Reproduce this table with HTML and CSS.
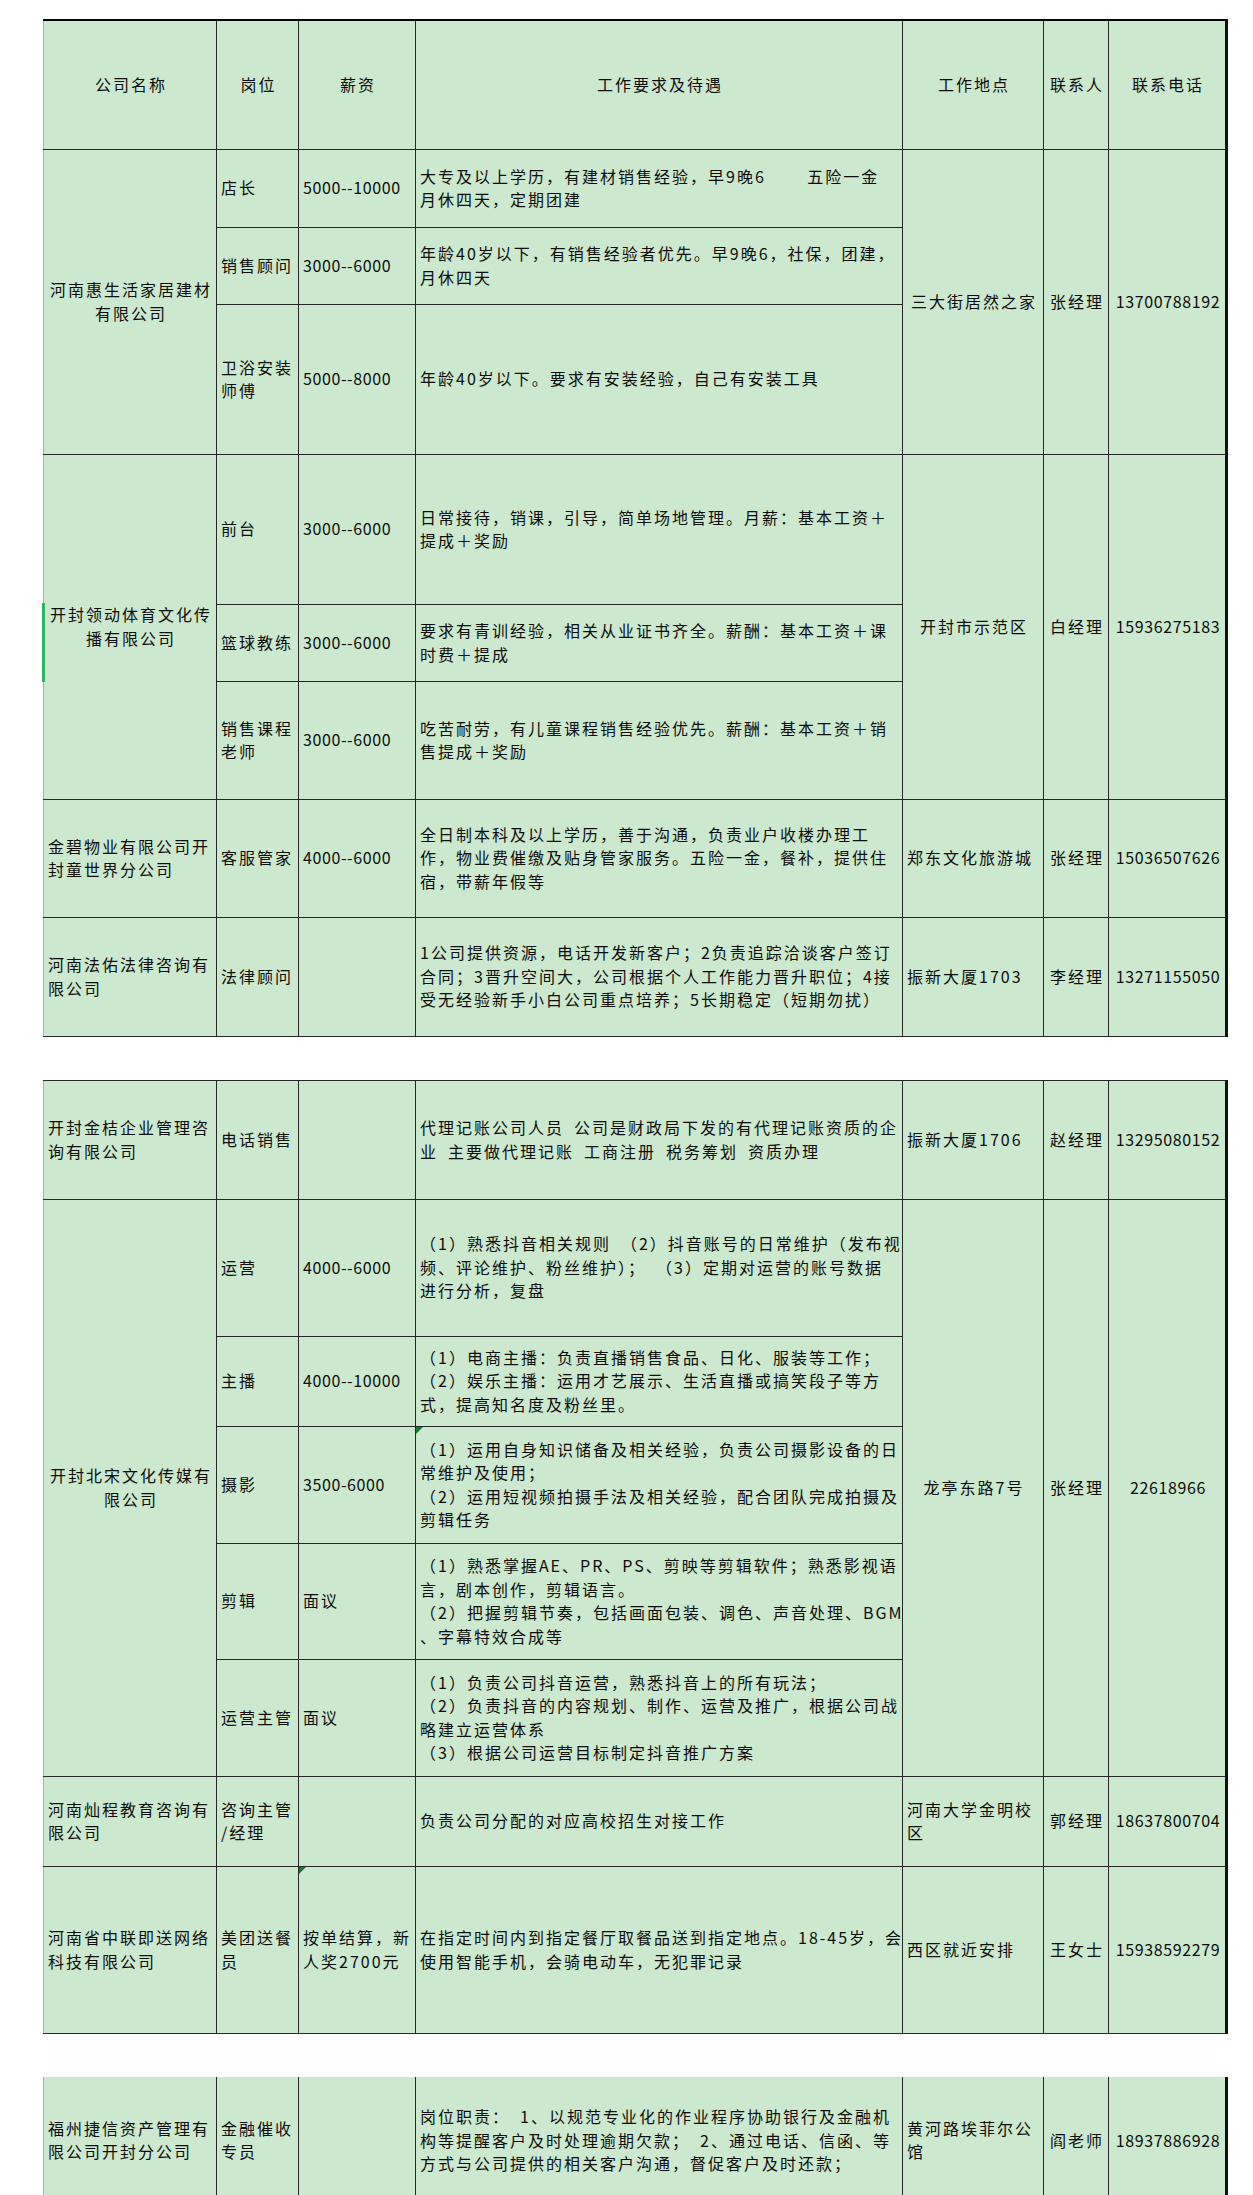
FILE: index.html
```html
<!DOCTYPE html>
<html lang="zh-CN">
<head>
<meta charset="utf-8">
<title>招聘信息</title>
<link rel="stylesheet" href="styles.css">
</head>
<body>
<div class="sheet">
  <span class="row-mark"></span>

  <table class="jobs first">
    <colgroup>
      <col class="c-co"><col class="c-pos"><col class="c-pay"><col class="c-desc"><col class="c-loc"><col class="c-who"><col class="c-tel">
    </colgroup>
    <tr class="h129">
      <th class="co">公司名称</th><th>岗位</th><th>薪资</th><th>工作要求及待遇</th><th>工作地点</th><th>联系人</th><th>联系电话</th>
    </tr>
    <tr class="h78">
      <td class="co center" rowspan="3">河南惠生活家居建材<br>有限公司</td>
      <td>店长</td>
      <td class="num">5000--10000</td>
      <td>大专及以上学历，有建材销售经验，早9晚6　　 五险一金<br>月休四天，定期团建</td>
      <td class="center" rowspan="3">三大街居然之家</td>
      <td class="center" rowspan="3">张经理</td>
      <td class="center num" rowspan="3">13700788192</td>
    </tr>
    <tr class="h77">
      <td>销售顾问</td>
      <td class="num">3000--6000</td>
      <td>年龄40岁以下，有销售经验者优先。早9晚6，社保，团建，<br>月休四天</td>
    </tr>
    <tr class="h150">
      <td>卫浴安装<br>师傅</td>
      <td class="num">5000--8000</td>
      <td>年龄40岁以下。要求有安装经验，自己有安装工具</td>
    </tr>
    <tr class="h150">
      <td class="co center" rowspan="3">开封领动体育文化传<br>播有限公司</td>
      <td>前台</td>
      <td class="num">3000--6000</td>
      <td>日常接待，销课，引导，简单场地管理。月薪：基本工资＋<br>提成＋奖励</td>
      <td class="center" rowspan="3">开封市示范区</td>
      <td class="center" rowspan="3">白经理</td>
      <td class="center num" rowspan="3">15936275183</td>
    </tr>
    <tr class="h77">
      <td>篮球教练</td>
      <td class="num">3000--6000</td>
      <td>要求有青训经验，相关从业证书齐全。薪酬：基本工资＋课<br>时费＋提成</td>
    </tr>
    <tr class="h118">
      <td>销售课程<br>老师</td>
      <td class="num">3000--6000</td>
      <td>吃苦耐劳，有儿童课程销售经验优先。薪酬：基本工资＋销<br>售提成＋奖励</td>
    </tr>
    <tr class="h118">
      <td class="co">金碧物业有限公司开<br>封童世界分公司</td>
      <td>客服管家</td>
      <td class="num">4000--6000</td>
      <td>全日制本科及以上学历，善于沟通，负责业户收楼办理工<br>作，物业费催缴及贴身管家服务。五险一金，餐补，提供住<br>宿，带薪年假等</td>
      <td>郑东文化旅游城</td>
      <td class="center">张经理</td>
      <td class="center num">15036507626</td>
    </tr>
    <tr class="h119">
      <td class="co">河南法佑法律咨询有<br>限公司</td>
      <td>法律顾问</td>
      <td></td>
      <td>1公司提供资源，电话开发新客户；2负责追踪洽谈客户签订<br>合同；3晋升空间大，公司根据个人工作能力晋升职位；4接<br>受无经验新手小白公司重点培养；5长期稳定（短期勿扰）</td>
      <td>振新大厦1703</td>
      <td class="center">李经理</td>
      <td class="center num">13271155050</td>
    </tr>
  </table>

  <table class="jobs second">
    <colgroup>
      <col class="c-co"><col class="c-pos"><col class="c-pay"><col class="c-desc"><col class="c-loc"><col class="c-who"><col class="c-tel">
    </colgroup>
    <tr class="h119">
      <td class="co">开封金桔企业管理咨<br>询有限公司</td>
      <td>电话销售</td>
      <td></td>
      <td>代理记账公司人员&ensp;公司是财政局下发的有代理记账资质的企<br>业&ensp;主要做代理记账&ensp;工商注册&ensp;税务筹划&ensp;资质办理</td>
      <td>振新大厦1706</td>
      <td class="center">赵经理</td>
      <td class="center num">13295080152</td>
    </tr>
    <tr class="h137">
      <td class="co center" rowspan="5">开封北宋文化传媒有<br>限公司</td>
      <td>运营</td>
      <td class="num">4000--6000</td>
      <td>（1）熟悉抖音相关规则&ensp;（2）抖音账号的日常维护（发布视<br>频、评论维护、粉丝维护）；&ensp;（3）定期对运营的账号数据<br>进行分析，复盘</td>
      <td class="center" rowspan="5">龙亭东路7号</td>
      <td class="center" rowspan="5">张经理</td>
      <td class="center num" rowspan="5">22618966</td>
    </tr>
    <tr class="h90">
      <td>主播</td>
      <td class="num">4000--10000</td>
      <td>（1）电商主播：负责直播销售食品、日化、服装等工作；<br>（2）娱乐主播：运用才艺展示、生活直播或搞笑段子等方<br>式，提高知名度及粉丝里。</td>
    </tr>
    <tr class="h117">
      <td>摄影</td>
      <td class="num">3500-6000</td>
      <td class="flag">（1）运用自身知识储备及相关经验，负责公司摄影设备的日<br>常维护及使用；<br>（2）运用短视频拍摄手法及相关经验，配合团队完成拍摄及<br>剪辑任务</td>
    </tr>
    <tr class="h116">
      <td>剪辑</td>
      <td>面议</td>
      <td>（1）熟悉掌握AE、PR、PS、剪映等剪辑软件；熟悉影视语<br>言，剧本创作，剪辑语言。<br>（2）把握剪辑节奏，包括画面包装、调色、声音处理、BGM<br>、字幕特效合成等</td>
    </tr>
    <tr class="h117">
      <td>运营主管</td>
      <td>面议</td>
      <td>（1）负责公司抖音运营，熟悉抖音上的所有玩法；<br>（2）负责抖音的内容规划、制作、运营及推广，根据公司战<br>略建立运营体系<br>（3）根据公司运营目标制定抖音推广方案</td>
    </tr>
    <tr class="h90">
      <td class="co">河南灿程教育咨询有<br>限公司</td>
      <td>咨询主管<br>/经理</td>
      <td></td>
      <td>负责公司分配的对应高校招生对接工作</td>
      <td>河南大学金明校<br>区</td>
      <td class="center">郭经理</td>
      <td class="center num">18637800704</td>
    </tr>
    <tr class="h167">
      <td class="co">河南省中联即送网络<br>科技有限公司</td>
      <td>美团送餐<br>员</td>
      <td class="flag">按单结算，新<br>人奖2700元</td>
      <td>在指定时间内到指定餐厅取餐品送到指定地点。18-45岁，会<br>使用智能手机，会骑电动车，无犯罪记录</td>
      <td>西区就近安排</td>
      <td class="center">王女士</td>
      <td class="center num">15938592279</td>
    </tr>
  </table>

  <table class="jobs third">
    <colgroup>
      <col class="c-co"><col class="c-pos"><col class="c-pay"><col class="c-desc"><col class="c-loc"><col class="c-who"><col class="c-tel">
    </colgroup>
    <tr class="h128">
      <td class="co">福州捷信资产管理有<br>限公司开封分公司</td>
      <td>金融催收<br>专员</td>
      <td></td>
      <td>岗位职责：&ensp;1、以规范专业化的作业程序协助银行及金融机<br>构等提醒客户及时处理逾期欠款；&ensp;2、通过电话、信函、等<br>方式与公司提供的相关客户沟通，督促客户及时还款；</td>
      <td>黄河路埃菲尔公<br>馆</td>
      <td class="center">阎老师</td>
      <td class="center num">18937886928</td>
    </tr>
  </table>
</div>
</body>
</html>
```

FILE: styles.css
```css
* {
  box-sizing: border-box;
}

html,
body {
  margin: 0;
  padding: 0;
  background: #ffffff;
}

body {
  font-family: "Noto Sans CJK SC", "Noto Sans", sans-serif;
  font-size: 16px;
  color: #0d0d0d;
  overflow: hidden;
}

.sheet {
  position: relative;
  display: flex;
  flex-direction: column;
  align-items: flex-start;
  gap: 43px;
  padding: 19px 0 0 43px;
}

.jobs {
  border-collapse: collapse;
  table-layout: fixed;
  width: 1183px;
  background: #cce8cf;
  border-right: 3px solid #111111;
}

.c-co { width: 173px; }
.c-pos { width: 82px; }
.c-pay { width: 117px; }
.c-desc { width: 487px; }
.c-loc { width: 141px; }
.c-who { width: 65px; }
.c-tel { width: 118px; }

.jobs th,
.jobs td {
  border: 1px solid #262626;
  padding: 0 2px 0 4px;
  vertical-align: middle;
  text-align: left;
  line-height: 23.5px;
  letter-spacing: 2px;
  white-space: nowrap;
  font-weight: 400;
  overflow: visible;
}

.jobs th {
  text-align: center;
}

.jobs .num {
  letter-spacing: 0.6px;
}

.jobs .co {
  border-left-color: #a8b3c2;
}

.jobs .center {
  text-align: center;
}

.first tr:first-child th {
  border-top: 2px solid #000000;
}

.third tr:first-child td {
  border-top: none;
}

.h77 { height: 77px; }
.h78 { height: 78px; }
.h90 { height: 90px; }
.h116 { height: 116px; }
.h117 { height: 117px; }
.h118 { height: 118px; }
.h119 { height: 119px; }
.h128 { height: 128px; }
.h129 { height: 129px; }
.h137 { height: 137px; }
.h150 { height: 150px; }
.h167 { height: 167px; }

.flag {
  position: relative;
}

.flag::before {
  content: "";
  position: absolute;
  left: 0;
  top: 0;
  border-top: 7px solid #17782f;
  border-right: 7px solid transparent;
}

.row-mark {
  position: absolute;
  left: 42px;
  top: 603px;
  width: 3px;
  height: 79px;
  background: #2fb463;
  z-index: 1;
}
```
